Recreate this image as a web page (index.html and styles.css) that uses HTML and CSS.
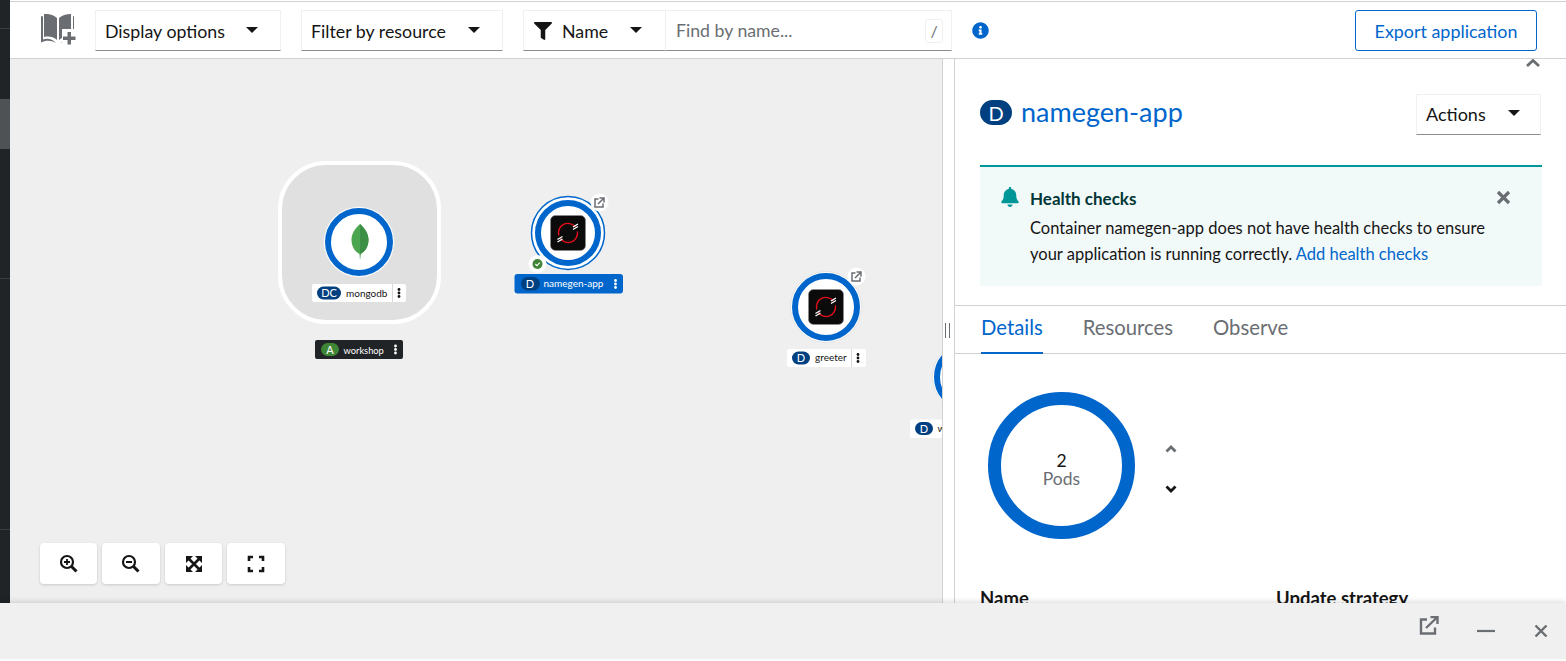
FILE: index.html
```html
<!DOCTYPE html>
<html lang="en">
<head>
<meta charset="utf-8">
<title>Topology</title>
<link rel="stylesheet" href="styles.css">
</head>
<body>
<div class="app">
  <div class="upper">
    <aside class="rail">
      <div class="rail-a"></div>
      <div class="rail-b"></div>
      <div class="rail-active"></div>
      <div class="rail-c"></div>
      <div class="rail-d"></div>
      <div class="rail-e"></div>
    </aside>
    <div class="main">
      <header class="toolbar">
        <svg class="book" viewBox="0 0 36 32" width="36" height="32">
          <path fill="#6a6e73" d="M1 3v26.500c5-2.500 10-2.500 15 .5-4-4.500-9-5-13-3.500V3.500zM4 1v23c4.500-1 9-.5 13 3V5C13.500 1.500 9 .500 4 1zM19 5v22c3-2.500 7-4 12-4V1c-5 0-9 1.500-12 4zM33 3.500v13l1-.5V3zM21 30c1-1 2-1.700 3-2.300v2.300z"/>
          <path fill="#fff" d="M22 16h14v16H22z"/>
          <path fill="#6a6e73" d="M27.500 19h3.500v4.500h4.500V27H31v4.500h-3.500V27H23v-3.500h4.500z"/>
        </svg>
        <div class="select select-display"><span>Display options</span><i class="caret"></i></div>
        <div class="select select-filter"><span>Filter by resource</span><i class="caret"></i></div>
        <div class="findgroup">
          <div class="select select-name">
            <svg class="funnel" viewBox="0 0 512 512" width="18" height="18"><path fill="#151515" d="M487.976 0H24.028C2.71 0-8.047 25.866 7.058 40.971L192 225.941V432c0 7.831 3.821 15.17 10.237 19.662l80 55.98C298.020 518.690 320 507.493 320 487.980V225.941l184.947-184.970C520.021 25.896 509.338 0 487.976 0z"/></svg>
            <span>Name</span><i class="caret"></i>
          </div>
          <div class="find">
            <span class="placeholder">Find by name...</span>
            <kbd class="slash">/</kbd>
          </div>
        </div>
        <svg class="info" viewBox="0 0 512 512" width="17" height="17"><path fill="#06c" d="M256 8C119.043 8 8 119.083 8 256c0 136.997 111.043 248 248 248s248-111.003 248-248C504 119.083 392.957 8 256 8zm0 110c23.196 0 42 18.804 42 42s-18.804 42-42 42-42-18.804-42-42 18.804-42 42-42zm56 254c0 6.627-5.373 12-12 12h-88c-6.627 0-12-5.373-12-12v-24c0-6.627 5.373-12 12-12h12v-64h-12c-6.627 0-12-5.373-12-12v-24c0-6.627 5.373-12 12-12h64c6.627 0 12 5.373 12 12v100h12c6.627 0 12 5.373 12 12v24z"/></svg>
        <button class="export">Export application</button>
      </header>
      <div class="content">
        <section class="canvas">
          <svg class="graph" viewBox="10 59 932 544" width="932" height="544">
            <defs>
              <g id="rh">
                <rect x="-17.500" y="-17.500" width="35" height="35" rx="5" fill="#0b0b0b" stroke="#8a8d90" stroke-width=".6"/>
                <path d="M-9.200 2.500A9.500 9.500 0 0 1 7.300-6.100" fill="none" stroke="#e0101a" stroke-width="1.400"/>
                <path d="M9.400-1.600A9.500 9.500 0 0 1-7.800 5.400" fill="none" stroke="#e0101a" stroke-width="1.400"/>
                <path d="M5-6l5-3M5-3.500l5-3M-10.500 6.500l5-3M-10.500 9l5-3" stroke="#fff" stroke-width="1.300"/>
              </g>
              <g id="ext">
                <circle r="9" fill="#fff"/>
                <path d="M-1-3.500h-3.500v8h8v-3.500M-1.500 1.500l5-5M0-4.500h4.500v4.500" fill="none" stroke="#6a6e73" stroke-width="1.500"/>
              </g>
              <g id="kebab">
                <circle cy="-3.500" r="1.400"/><circle r="1.400"/><circle cy="3.500" r="1.400"/>
              </g>
            </defs>

            <rect x="280" y="163" width="159" height="159" rx="46" fill="#e0e0e0" stroke="#fff" stroke-width="4"/>
            <circle cx="359" cy="242" r="35.500" fill="#fff" stroke="#e4e4e4" stroke-width="1"/>
            <circle cx="359" cy="242" r="31" fill="#fff" stroke="#06c" stroke-width="6"/>
            <path d="M360 224c6 5 8.500 11 8.500 16 0 7-4 12-8 14l-.5 6-.5-6c-4-2-8-7-8-14 0-5 2.500-11 8.500-16z" fill="#4ca64f"/>
            <path d="M360 224c6 5 8.500 11 8.500 16 0 7-4 12-8 14l-.5 6z" fill="#3d8f45"/>
            <rect x="312" y="284" width="94" height="18" rx="2" fill="#fff"/>
            <rect x="317" y="286.500" width="24" height="13" rx="6.500" fill="#004080"/>
            <text class="pill-text" x="329" y="297">DC</text>
            <text class="node-text" x="346" y="296.500">mongodb</text>
            <path d="M392.500 284v18" stroke="#d8d8d8"/>
            <use href="#kebab" x="399" y="293" fill="#151515"/>

            <rect x="315" y="340" width="88" height="19" rx="2" fill="#212427"/>
            <rect x="321" y="343" width="18" height="13" rx="6.500" fill="#3e8635"/>
            <text class="pill-text" x="330" y="353.500">A</text>
            <text class="node-text node-light node-tight" x="343.500" y="353.500">workshop</text>
            <use href="#kebab" x="395.500" y="349.500" fill="#fff"/>

            <circle cx="568" cy="233" r="36.500" fill="#fff" stroke="#06c" stroke-width="1.500"/>
            <circle cx="568" cy="233" r="30" fill="#fff" stroke="#06c" stroke-width="6"/>
            <use href="#rh" x="568" y="233"/>
            <use href="#ext" x="599.500" y="202.500"/>
            <circle cx="537.500" cy="264" r="9" fill="#fff"/>
            <circle cx="537.500" cy="264" r="5" fill="#3e8635"/>
            <path d="M535.300 264l1.700 1.700 2.800-3" fill="none" stroke="#fff" stroke-width="1.100"/>
            <rect x="514.500" y="274" width="108.500" height="19.500" rx="3" fill="#06c"/>
            <rect x="521" y="277" width="19" height="13.500" rx="6.700" fill="#004080"/>
            <text class="pill-text" x="530" y="288">D</text>
            <text class="node-text node-light" x="543.500" y="287">namegen-app</text>
            <use href="#kebab" x="615.500" y="284" fill="#fff"/>

            <circle cx="826" cy="307" r="35.500" fill="#fff" stroke="#e4e4e4"/>
            <circle cx="826" cy="307" r="31" fill="#fff" stroke="#06c" stroke-width="6"/>
            <use href="#rh" x="826" y="307"/>
            <use href="#ext" x="856.500" y="276.500"/>
            <rect x="787" y="349" width="79" height="18" rx="2" fill="#fff"/>
            <rect x="792" y="351.500" width="18" height="13" rx="6.500" fill="#004080"/>
            <text class="pill-text" x="801" y="362">D</text>
            <text class="node-text" x="815" y="361">greeter</text>
            <path d="M851.500 349v18" stroke="#d8d8d8"/>
            <use href="#kebab" x="858" y="358" fill="#151515"/>

            <circle cx="968" cy="377" r="35.500" fill="#fff" stroke="#e4e4e4"/>
            <circle cx="968" cy="377" r="31" fill="#fff" stroke="#06c" stroke-width="6"/>
            <rect x="910" y="419.500" width="60" height="18.500" rx="2" fill="#fff"/>
            <rect x="915" y="422" width="18" height="13" rx="6.500" fill="#004080"/>
            <text class="pill-text" x="924" y="432.500">D</text>
            <text class="node-text" x="937.500" y="432">w</text>
          </svg>
          <div class="zoombar">
            <button class="zoombtn">
              <svg viewBox="0 0 20 20" width="20" height="20"><circle cx="8" cy="8" r="6" fill="none" stroke="#151515" stroke-width="2.200"/><path d="M12.500 12.500l5 5" stroke="#151515" stroke-width="3"/><path d="M5 8h6M8 5v6" stroke="#151515" stroke-width="1.800"/></svg>
            </button>
            <button class="zoombtn">
              <svg viewBox="0 0 20 20" width="20" height="20"><circle cx="8" cy="8" r="6" fill="none" stroke="#151515" stroke-width="2.200"/><path d="M12.500 12.500l5 5" stroke="#151515" stroke-width="3"/><path d="M5 8h6" stroke="#151515" stroke-width="2"/></svg>
            </button>
            <button class="zoombtn">
              <svg viewBox="0 0 20 20" width="20" height="20"><path d="M3 3l14 14M17 3L3 17" stroke="#151515" stroke-width="2.600"/><path d="M2 2h7L2 9zM18 2h-7l7 7zM2 18h7l-7-7zM18 18h-7l7-7z" fill="#151515"/></svg>
            </button>
            <button class="zoombtn">
              <svg viewBox="0 0 20 20" width="20" height="20"><path d="M7 3H3v4M13 3h4v4M7 17H3v-4M13 17h4v-4" fill="none" stroke="#151515" stroke-width="2.600"/></svg>
            </button>
          </div>
        </section>
        <div class="splitter"><i class="grip"></i></div>
        <section class="panel">
          <svg class="panel-up" viewBox="0 0 16 10" width="16" height="10"><path d="M2 8l6-5.500L14 8" fill="none" stroke="#6a6e73" stroke-width="2.800"/></svg>
          <div class="panel-head">
            <span class="bigpill">D</span>
            <h1 class="title">namegen-app</h1>
            <div class="select select-actions"><span>Actions</span><i class="caret"></i></div>
          </div>
          <div class="alert">
            <svg class="bell" viewBox="0 0 448 512" width="18" height="20"><path fill="#009596" d="M224 512c35.320 0 63.970-28.650 63.970-64H160.030c0 35.350 28.650 64 63.970 64zm215.390-149.710c-19.320-20.760-55.470-51.990-55.470-154.290 0-77.700-54.480-139.900-127.940-155.160V32c0-17.670-14.320-32-31.980-32s-31.980 14.330-31.980 32v20.840C118.560 68.100 64.080 130.300 64.080 208c0 102.300-36.150 133.530-55.470 154.290-6 6.450-8.660 14.160-8.610 21.710.11 16.400 12.980 32 32.100 32h383.800c19.120 0 32-15.600 32.100-32 .05-7.550-2.610-15.270-8.610-21.710z"/></svg>
            <div class="alert-body">
              <h2 class="alert-title">Health checks</h2>
              <p class="alert-text">Container namegen-app does not have health checks to ensure your application is running correctly. <a class="link">Add health checks</a></p>
            </div>
            <svg class="alert-x" viewBox="0 0 15 15" width="15" height="15"><path d="M2 2l11 11M13 2L2 13" stroke="#6a6e73" stroke-width="3.200"/></svg>
          </div>
          <nav class="tabs">
            <span class="tab tab-on">Details</span>
            <span class="tab">Resources</span>
            <span class="tab">Observe</span>
          </nav>
          <div class="pods">
            <div class="donut">
              <span class="donut-num">2</span>
              <span class="donut-label">Pods</span>
            </div>
            <div class="scale">
              <svg viewBox="0 0 12 8" width="12" height="8"><path d="M1.500 6.500L6 2l4.500 4.500" fill="none" stroke="#6a6e73" stroke-width="2.800"/></svg>
              <svg viewBox="0 0 12 8" width="12" height="8"><path d="M1.500 1.500L6 6l4.500-4.500" fill="none" stroke="#151515" stroke-width="2.800"/></svg>
            </div>
          </div>
          <div class="props">
            <span class="prop">Name</span>
            <span class="prop">Update strategy</span>
          </div>
        </section>
      </div>
    </div>
  </div>
  <footer class="dock">
    <svg viewBox="0 0 20 20" width="20" height="20"><path d="M8 3.500H2v14h14v-6M7 12L18 1.500M11.500 1h7v7" fill="none" stroke="#6a6e73" stroke-width="2.400"/></svg>
    <svg viewBox="0 0 18 4" width="18" height="4"><path d="M0 2h18" stroke="#6a6e73" stroke-width="2.200"/></svg>
    <svg viewBox="0 0 14 14" width="14" height="14"><path d="M1.500 1.500l11 11M12.500 1.500l-11 11" stroke="#6a6e73" stroke-width="2.400"/></svg>
  </footer>
</div>
</body>
</html>
```

FILE: styles.css
```css
* { box-sizing: border-box; }
html, body { margin: 0; height: 100%; background: #fff; overflow: hidden; }
body { font-family: Lato, "Noto Sans", sans-serif; color: #151515; font-size: 16px; }

.app { display: flex; flex-direction: column; height: 659px; }
.upper { display: flex; height: 603px; }

.rail { width: 10px; flex: none; display: flex; flex-direction: column; background: #212427; }
.rail-a { height: 29px; border-bottom: 1px solid #3c3f42; }
.rail-b { height: 70px; }
.rail-active { height: 50px; background: #4f5255; }
.rail-c { height: 130px; border-bottom: 1px solid #3c3f42; }
.rail-d { height: 251px; border-bottom: 1px solid #3c3f42; }
.rail-e { flex: 1; }

.main { flex: 1; min-width: 0; display: flex; flex-direction: column; }
.toolbar {
  height: 58px; flex: none; display: flex; align-items: flex-start;
  margin-top: 1px; border-top: 1px solid #d2d2d2; border-bottom: 1px solid #d2d2d2;
  padding: 8px 29px 0 30px; background: #fff;
}
.book { margin-top: 3px; margin-right: 19px; flex: none; }
.select {
  display: flex; align-items: center; justify-content: space-between;
  height: 41px; padding: 0 22px 0 9px; background: #fff; font-size: 17.800px;
  border: 1px solid #f0f0f0; border-bottom-color: #8a8d90;
}
.caret {
  flex: none; width: 0; height: 0; margin-top: -2px;
  border-left: 6px solid transparent; border-right: 6px solid transparent; border-top: 6px solid #151515;
}
.select-display { width: 186px; margin-right: 20px; }
.select-filter { width: 202px; margin-right: 20px; }
.findgroup { display: flex; width: 429px; margin-right: 20px; }
.select-name { width: 143px; padding-left: 10px; justify-content: flex-start; padding-right: 23px; }
.funnel { margin-right: 10px; flex: none; }
.select-name span { flex: 1; }
.find {
  flex: 1; display: flex; align-items: center; justify-content: space-between;
  height: 41px; padding: 0 8px 0 10px; border: 1px solid #f0f0f0; border-left: 0; border-bottom-color: #8a8d90;
  font-size: 17.700px;
}
.placeholder { color: #6a6e73; }
.slash {
  width: 18px; height: 24px; display: flex; align-items: center; justify-content: center;
  border: 1px solid #f0f0f0; border-radius: 3px; font: 16px Lato, sans-serif; color: #6a6e73;
}
.info { flex: none; margin-top: 12px; }
.export {
  margin-left: auto; width: 182px; height: 41px; padding: 0;
  background: #fff; border: 1px solid #06c; border-radius: 3px; color: #06c;
  font: 17.900px Lato, sans-serif;
}

.content { flex: 1; min-height: 0; display: flex; }
.canvas { position: relative; width: 933px; flex: none; background: #efefef; border-right: 1px solid #d2d2d2; overflow: hidden; }
.graph { display: block; }
.pill-text { font: 11px Lato, sans-serif; fill: #fff; text-anchor: middle; }
.node-text { font: 10px Lato, sans-serif; fill: #151515; }
.node-light { fill: #fff; }
.node-tight { font-size: 9.300px; }
.zoombar { position: absolute; left: 30px; top: 484px; display: flex; gap: 5px; }
.zoombtn {
  width: 57px; height: 41px; padding: 0; display: flex; align-items: center; justify-content: center;
  background: #fff; border: 0; border-radius: 4px; box-shadow: 0 1px 3px rgba(3,3,3,.16);
}
.zoombtn:nth-child(even) { width: 58px; }

.splitter { width: 12px; flex: none; display: flex; align-items: center; justify-content: center; background: #fff; border-right: 1px solid #d2d2d2; padding-bottom: 2px; }
.grip { width: 5px; height: 15px; margin-left: -2px; border-left: 1px solid #6a6e73; border-right: 1px solid #6a6e73; }

.panel { position: relative; flex: 1; min-width: 0; overflow: hidden; background: #fff; padding-top: 34px; }
.panel-up { position: absolute; right: 25px; top: -1px; }
.panel-head { display: flex; align-items: center; padding: 0 25px; height: 42px; }
.bigpill {
  width: 32px; height: 25px; border-radius: 13px; flex: none; margin-top: -3px; background: #004080; color: #fff;
  display: flex; align-items: center; justify-content: center; font-size: 20px;
}
.title { margin: -5px 0 0 9px; flex: 1; font-size: 27px; font-weight: 400; color: #06c; }
.select-actions { width: 125px; flex: none; padding-right: 20px; font-size: 18px; }

.alert {
  display: flex; align-items: flex-start; margin: 30px 24px 0 25px; height: 121px;
  padding: 20px 31px 0 21px; background: #f2f9f9; border-top: 2px solid #009596;
}
.bell { flex: none; margin-right: 11px; }
.alert-body { flex: 1; }
.alert-title { margin: 0 0 4px; font-size: 17px; font-weight: 700; line-height: 24px; color: #003737; }
.alert-text { margin: 0; font-size: 16.500px; line-height: 26px; }
.link { color: #06c; }
.alert-x { flex: none; margin-top: 3px; margin-left: 6px; }

.tabs { display: flex; gap: 40px; height: 49px; margin-top: 19px; padding-left: 26px; border-top: 1px solid #d2d2d2; border-bottom: 1px solid #d2d2d2; }
.tab { height: 48px; display: flex; align-items: center; padding-bottom: 6px; font-size: 20.300px; color: #6a6e73; }
.tab-on { color: #06c; border-bottom: 2px solid #06c; padding-bottom: 4px; }

.pods { display: flex; align-items: center; margin-top: 38px; padding-left: 33px; }
.donut {
  width: 147px; height: 147px; border-radius: 50%; border: 13px solid #06c; flex: none; padding-top: 8px;
  display: flex; flex-direction: column; align-items: center; justify-content: center; line-height: 18px;
}
.donut-num { font-size: 17.500px; }
.donut-label { font-size: 17.500px; color: #6a6e73; }
.scale { display: flex; flex-direction: column; gap: 32px; margin-left: 30px; padding-top: 6px; }
.scale svg { display: block; }

.props { display: grid; grid-template-columns: 296px auto; margin-top: 49px; padding-left: 25px; }
.prop { font-size: 18.500px; font-weight: 700; line-height: 20px; }

.dock {
  position: relative; height: 56px; flex: none; background: #f0f0f0; box-shadow: 0 -2px 5px rgba(3,3,3,.12);
  display: flex; align-items: flex-start; justify-content: flex-end; padding-right: 18px;
}
.dock svg:nth-child(1) { margin-top: 13px; margin-right: 38px; }
.dock svg:nth-child(2) { margin-top: 26px; margin-right: 39px; }
.dock svg:nth-child(3) { margin-top: 21px; }
```
